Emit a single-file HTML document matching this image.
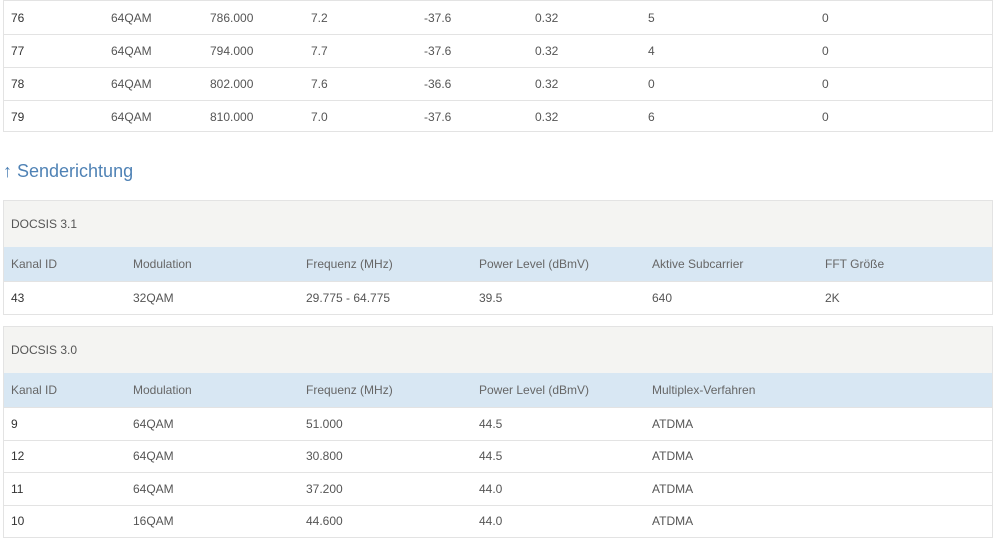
<!DOCTYPE html>
<html><head><meta charset="utf-8"><style>
*{margin:0;padding:0;box-sizing:border-box}
body{width:998px;height:552px;background:#fff;font-family:"Liberation Sans",sans-serif;font-size:12px;color:#555;position:relative;overflow:hidden}
.box{position:absolute;left:3px;width:990px;border:1px solid #e3e3e3}
.row{position:relative;height:32.5px;border-top:1px solid #e3e3e3}
.row:first-child{border-top:none}
.row span{position:absolute;top:50%;transform:translateY(-50%);white-space:nowrap}
.row span.b{color:#333}
.gray{background:#f4f4f2;height:46px;border-top:none}
.blue{background:#d8e7f3;height:34px;border-top:none;color:#666}
h2{position:absolute;left:3px;top:161px;font-weight:normal;font-size:18px;color:#4f82b5}
</style></head><body>
<div class="box" style="top:0;height:132px">
<div class="row" style="height:33px"><span class="b" style="left:7px">76</span><span style="left:107px">64QAM</span><span style="left:206px">786.000</span><span style="left:307px">7.2</span><span style="left:420px">-37.6</span><span style="left:531px">0.32</span><span style="left:644px">5</span><span style="left:818px">0</span></div>
<div class="row" style="height:33px"><span class="b" style="left:7px">77</span><span style="left:107px">64QAM</span><span style="left:206px">794.000</span><span style="left:307px">7.7</span><span style="left:420px">-37.6</span><span style="left:531px">0.32</span><span style="left:644px">4</span><span style="left:818px">0</span></div>
<div class="row" style="height:33px"><span class="b" style="left:7px">78</span><span style="left:107px">64QAM</span><span style="left:206px">802.000</span><span style="left:307px">7.6</span><span style="left:420px">-36.6</span><span style="left:531px">0.32</span><span style="left:644px">0</span><span style="left:818px">0</span></div>
<div class="row" style="height:33px"><span class="b" style="left:7px">79</span><span style="left:107px">64QAM</span><span style="left:206px">810.000</span><span style="left:307px">7.0</span><span style="left:420px">-37.6</span><span style="left:531px">0.32</span><span style="left:644px">6</span><span style="left:818px">0</span></div>
</div>
<h2>↑ Senderichtung</h2>
<div class="box" style="top:200px">
<div class="row gray"><span style="left:7px">DOCSIS 3.1</span></div>
<div class="row blue"><span style="left:7px">Kanal ID</span><span style="left:129px">Modulation</span><span style="left:302px">Frequenz (MHz)</span><span style="left:475px">Power Level (dBmV)</span><span style="left:648px">Aktive Subcarrier</span><span style="left:821px">FFT Größe</span></div>
<div class="row"><span class="b" style="left:7px">43</span><span style="left:129px">32QAM</span><span style="left:302px">29.775 - 64.775</span><span style="left:475px">39.5</span><span style="left:648px">640</span><span style="left:821px">2K</span></div>
</div>
<div class="box" style="top:326px">
<div class="row gray"><span style="left:7px">DOCSIS 3.0</span></div>
<div class="row blue"><span style="left:7px">Kanal ID</span><span style="left:129px">Modulation</span><span style="left:302px">Frequenz (MHz)</span><span style="left:475px">Power Level (dBmV)</span><span style="left:648px">Multiplex-Verfahren</span></div>
<div class="row"><span class="b" style="left:7px">9</span><span style="left:129px">64QAM</span><span style="left:302px">51.000</span><span style="left:475px">44.5</span><span style="left:648px">ATDMA</span></div>
<div class="row"><span class="b" style="left:7px">12</span><span style="left:129px">64QAM</span><span style="left:302px">30.800</span><span style="left:475px">44.5</span><span style="left:648px">ATDMA</span></div>
<div class="row"><span class="b" style="left:7px">11</span><span style="left:129px">64QAM</span><span style="left:302px">37.200</span><span style="left:475px">44.0</span><span style="left:648px">ATDMA</span></div>
<div class="row"><span class="b" style="left:7px">10</span><span style="left:129px">16QAM</span><span style="left:302px">44.600</span><span style="left:475px">44.0</span><span style="left:648px">ATDMA</span></div>
</div>
</body></html>
